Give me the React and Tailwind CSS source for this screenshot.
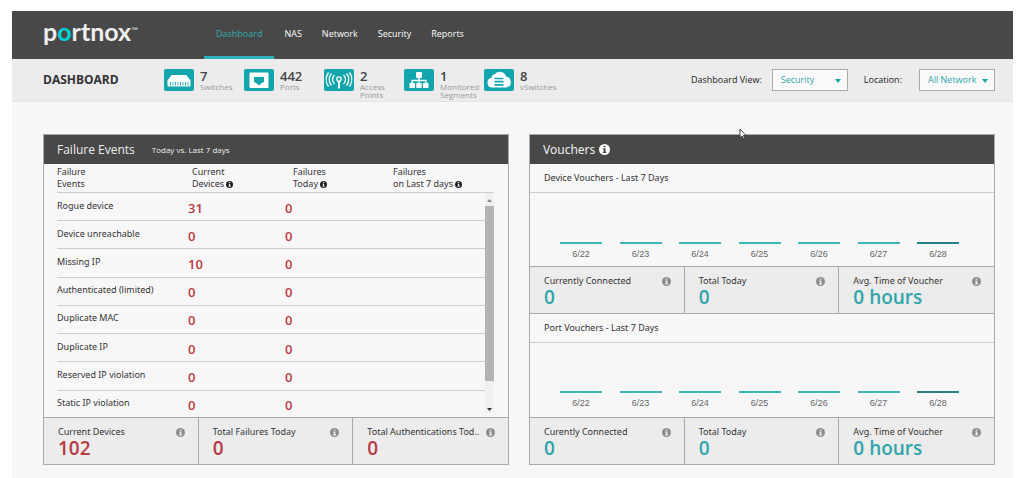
import { useState } from "react";

const NAV = ["Dashboard", "NAS", "Network", "Security", "Reports"];

const EVENTS = [
  { name: "Rogue device", current: 31, today: 0 },
  { name: "Device unreachable", current: 0, today: 0 },
  { name: "Missing IP", current: 10, today: 0 },
  { name: "Authenticated (limited)", current: 0, today: 0 },
  { name: "Duplicate MAC", current: 0, today: 0 },
  { name: "Duplicate IP", current: 0, today: 0 },
  { name: "Reserved IP violation", current: 0, today: 0 },
  { name: "Static IP violation", current: 0, today: 0 },
];

const DAYS = ["6/22", "6/23", "6/24", "6/25", "6/26", "6/27", "6/28"];

const SwitchIcon = () => (
  <svg viewBox="0 0 30 22" className="h-full w-full">
    <path d="M7.500 6h15l3.500 5H4z" fill="#fff" />
    <rect x="3.500" y="10.500" width="23" height="7" rx="1" fill="#fff" />
    <path d="M6.500 13v3.500M9 13v3.500M11.500 13v3.500M14 13v3.500M16.500 13v3.500M19 13v3.500M21.500 13v3.500M24 13v3.500" stroke="#12a5ac" strokeWidth="0.900" />
  </svg>
);

const PortIcon = () => (
  <svg viewBox="0 0 30 22" className="h-full w-full">
    <rect x="5.500" y="3.500" width="19" height="15.500" rx="1" fill="#fff" />
    <path d="M10 8h10v5l-3 1.500-1 1.500h-2l-1-1.500-3-1.500z" fill="#12a5ac" />
  </svg>
);

const AccessPointIcon = () => (
  <svg viewBox="0 0 30 22" className="h-full w-full" fill="none" stroke="#fff" strokeWidth="1.300">
    <circle cx="15" cy="10" r="2.200" />
    <path d="M15 12v7.500" strokeWidth="2" />
    <path d="M10.500 6a6 6 0 0 0 0 9M7.500 4.500a9 9 0 0 0 0 12M4.500 3.500a12 12 0 0 0 0 14" />
    <path d="M19.500 6a6 6 0 0 1 0 9M22.500 4.500a9 9 0 0 1 0 12M25.500 3.500a12 12 0 0 1 0 14" />
  </svg>
);

const SegmentIcon = () => (
  <svg viewBox="0 0 30 22" className="h-full w-full" fill="#fff">
    <rect x="12" y="3" width="6" height="6" rx="1" />
    <rect x="5.500" y="14" width="5.500" height="5" rx="0.500" />
    <rect x="12.250" y="14" width="5.500" height="5" rx="0.500" />
    <rect x="19" y="14" width="5.500" height="5" rx="0.500" />
    <path d="M15 9v5M8 14v-2.500h14V14" fill="none" stroke="#fff" strokeWidth="1.300" />
  </svg>
);

const CloudIcon = () => (
  <svg viewBox="0 0 30 22" className="h-full w-full">
    <path d="M8 18.500a5 5 0 0 1-.8-9.800A5 5 0 0 1 11 5a6.500 6.500 0 0 1 11 2.500 5.600 5.600 0 0 1 .5 11z" fill="#fff" />
    <path d="M10.500 9.500h9M10.500 12.700h9M10.500 15.900h9" stroke="#12a5ac" strokeWidth="1.700" />
  </svg>
);

const COUNTERS = [
  { value: 7, label: "Switches", Icon: SwitchIcon },
  { value: 442, label: "Ports", Icon: PortIcon },
  { value: 2, label: "Access Points", Icon: AccessPointIcon },
  { value: 1, label: "Monitored Segments", Icon: SegmentIcon },
  { value: 8, label: "vSwitches", Icon: CloudIcon },
];

const InfoIcon = ({ className }) => (
  <svg viewBox="0 0 16 16" className={className}>
    <circle cx="8" cy="8" r="8" fill="currentColor" />
    <path d="M6.700 2.500h2.800v2.300H6.700zM5.800 6.300h3.700v5h1.200v1.900H5.600v-1.900h1.200V8.100h-1z" fill="var(--dot)" />
  </svg>
);

const Dropdown = ({ id, label, options, className }) => {
  const [value, setValue] = useState(options[0]);

  return (
    <div className={className}>
      <label htmlFor={id} className="text-[9px] text-[#222]">{label}</label>
      <div className="relative">
        <select
          id={id}
          value={value}
          onChange={(e) => setValue(e.target.value)}
          className="block h-[22px] w-[76px] appearance-none border border-[#aaa] bg-[#f9f9f9] pl-2 text-[9px] text-[#2fa5ab]"
        >
          {options.map((o) => (
            <option key={o}>{o}</option>
          ))}
        </select>
        <svg viewBox="0 0 6 4" className="pointer-events-none absolute top-[10px] right-[7px] h-1 w-1.5">
          <path d="M0 0h6L3 4z" fill="#12a5ac" />
        </svg>
      </div>
    </div>
  );
};

const Stat = ({ label, value, color }) => (
  <div className="min-w-0 border-r border-[#aaa] bg-[#ececec] pt-2 pr-[13px] pl-[14px] last:border-r-0">
    <div className="flex h-3 items-center justify-between">
      <span className="text-[9px] whitespace-nowrap text-[#333]">{label}</span>
      <InfoIcon className="h-[9px] w-[9px] shrink-0 text-[#8d8d8d] [--dot:#ececec]" />
    </div>
    <p className={`font-['Open_Sans'] text-[19px] leading-5 font-semibold ${color}`}>{value}</p>
  </div>
);

const StatRow = ({ children }) => (
  <div className="grid h-[47px] grid-cols-3 border-t border-[#aaa]">{children}</div>
);

const VoucherChart = ({ title, className }) => (
  <>
    <h3 className="flex h-[29px] items-center border-b border-[#ccc] pl-[14px] text-[9px] text-[#333]">{title}</h3>
    <div className={className}>
      {DAYS.map((day, i) => (
        <div key={day} className="flex w-[42px] flex-col items-center gap-1">
          <div className={i === DAYS.length - 1 ? "h-0.5 w-full bg-[#267f85]" : "h-0.5 w-full bg-[#3bb5b5]"} />
          <span className="font-['Liberation_Sans'] text-[9px] leading-3 text-[#666]">{day}</span>
        </div>
      ))}
    </div>
  </>
);

const App = () => {
  return (
    <div className="min-h-screen bg-white pt-[11px] pr-[11px] pl-3 font-['Open_Sans',sans-serif]">
      <div className="bg-[#f7f7f7] pb-[14px]">
        <header className="flex h-12 bg-[#484848] pl-[31px]">
          <a href="#" className="flex w-[161px] items-start pt-1 font-['Lato',sans-serif] text-[25px] leading-8 font-bold text-[#eee]">
            p<span className="text-[#00d5dc]">o</span>rtnox
            <span className="text-[9px] leading-8 font-normal">™</span>
          </a>
          <nav className="flex">
            {NAV.map((item) => (
              <a
                key={item}
                href="#"
                className={
                  item === "Dashboard"
                    ? "flex items-center border-b-[3px] border-[#2cb1bf] px-3 text-[9px] text-[#35a9b0]"
                    : "flex items-center border-b-[3px] border-transparent px-[10px] text-[9px] text-white"
                }
              >
                {item}
              </a>
            ))}
          </nav>
        </header>

        <div className="flex h-[43px] justify-between border-b border-[#e4e4e4] bg-[#ececec] pr-[18px] pl-[31px]">
          <div className="flex">
            <h1 className="w-[121px] pt-[13px] text-[12px] leading-4 font-bold text-[#333]">DASHBOARD</h1>
            <ul className="flex pt-[10px]">
              {COUNTERS.map(({ value, label, Icon }) => (
                <li key={label} className="flex w-20 gap-[6px]">
                  <span className="h-[22px] w-[30px] shrink-0 rounded-xs bg-[#12a5ac]">
                    <Icon />
                  </span>
                  <div>
                    <p className="text-[13px] leading-[14px] font-semibold text-[#444]">{value}</p>
                    <p className="w-10 text-[8px] leading-2 text-[#999]">{label}</p>
                  </div>
                </li>
              ))}
            </ul>
          </div>
          <div className="flex items-center gap-4">
            <Dropdown id="view" label="Dashboard View:" options={["Security", "Operations"]} className="flex items-center gap-[10px]" />
            <Dropdown id="location" label="Location:" options={["All Network"]} className="flex items-center gap-[17px]" />
          </div>
        </div>

        <main className="grid grid-cols-2 gap-5 pt-8 pr-[18px] pl-[31px] font-['Noto_Sans',sans-serif]">
          <section className="flex flex-col border border-[#aaa]">
            <div className="flex h-[29px] items-center gap-[17px] bg-[#484848] pl-[13px] font-['Open_Sans',sans-serif] text-[#eee]">
              <h2 className="text-[12px]">Failure Events</h2>
              <span className="text-[8px]">Today vs. Last 7 days</span>
            </div>

            <div className="pr-[14px] pl-[13px]">
              <div className="grid h-[29px] grid-cols-[135px_101px_100px_1fr] items-center border-b border-[#ccc] text-[9px] leading-3 text-[#333]">
                <span>Failure<br />Events</span>
                <span>Current<br />Devices <InfoIcon className="inline h-[7px] w-[7px] text-[#222] [--dot:#f7f7f7]" /></span>
                <span>Failures<br />Today <InfoIcon className="inline h-[7px] w-[7px] text-[#222] [--dot:#f7f7f7]" /></span>
                <span>Failures<br />on Last 7 days <InfoIcon className="inline h-[7px] w-[7px] text-[#222] [--dot:#f7f7f7]" /></span>
              </div>

              <div className="flex h-[224px] overflow-hidden">
                <table className="h-[226px] grow table-fixed">
                  <tbody>
                    {EVENTS.map((e) => (
                      <tr key={e.name} className="border-b border-[#ccc]">
                        <th scope="row" className="w-[131px] p-0 pb-0.5 text-left text-[9px] leading-3 font-normal text-[#333]">{e.name}</th>
                        <td className="w-[97px] p-0 pt-0.5 font-['Open_Sans'] text-[13px] leading-4 font-semibold text-[#b93a42]">{e.current}</td>
                        <td className="p-0 pt-0.5 font-['Open_Sans'] text-[13px] leading-4 font-semibold text-[#b93a42]">{e.today}</td>
                      </tr>
                    ))}
                  </tbody>
                </table>
                <div className="mb-1 flex w-[9px] flex-col items-center justify-between bg-[#f0f0f0]">
                  <svg viewBox="0 0 5 3" className="mt-[6px] mb-1 h-[3px] w-[5px]"><path d="M0 3h5L2.500 0z" fill="#888" /></svg>
                  <div className="mb-auto h-[175px] w-full bg-[#b3b3b3]" />
                  <svg viewBox="0 0 5 3" className="mb-[2px] h-[3px] w-[5px]"><path d="M0 0h5L2.500 3z" fill="#333" /></svg>
                </div>
              </div>
            </div>

            <StatRow>
              <Stat label="Current Devices" value="102" color="text-[#b93a42]" />
              <Stat label="Total Failures Today" value="0" color="text-[#b93a42]" />
              <Stat label="Total Authentications Tod.." value="0" color="text-[#b93a42]" />
            </StatRow>
          </section>

          <section className="relative flex flex-col border border-[#aaa]">
            <div className="flex h-[29px] items-center gap-1 bg-[#484848] pl-[13px] text-[#eee]">
              <h2 className="text-[12px]">Vouchers</h2>
              <InfoIcon className="h-[11px] w-[11px] text-white [--dot:#484848]" />
            </div>
            <VoucherChart title="Device Vouchers - Last 7 Days" className="flex h-[73px] items-end justify-between pr-[35px] pb-[6px] pl-[30px]" />
            <StatRow>
              <Stat label="Currently Connected" value="0" color="text-[#2fa5ab]" />
              <Stat label="Total Today" value="0" color="text-[#2fa5ab]" />
              <Stat label="Avg. Time of Voucher" value="0 hours" color="text-[#2fa5ab]" />
            </StatRow>
            <div className="border-t border-[#aaa]" />
            <VoucherChart title="Port Vouchers - Last 7 Days" className="flex grow items-end justify-between pr-[35px] pb-[8px] pl-[30px]" />
            <StatRow>
              <Stat label="Curently Connected" value="0" color="text-[#2fa5ab]" />
              <Stat label="Total Today" value="0" color="text-[#2fa5ab]" />
              <Stat label="Avg. Time of Voucher" value="0 hours" color="text-[#2fa5ab]" />
            </StatRow>

            {/* mouse pointer */}
            <svg viewBox="0 0 8 12" className="absolute top-[-7px] left-[209px] h-3 w-2">
              <path d="M1 1v9l2-2 1.500 3 1.300-.6L4.500 7.500H7z" fill="#fff" stroke="#333" strokeWidth="0.900" />
            </svg>
          </section>
        </main>
      </div>
    </div>
  );
};

export default App;
